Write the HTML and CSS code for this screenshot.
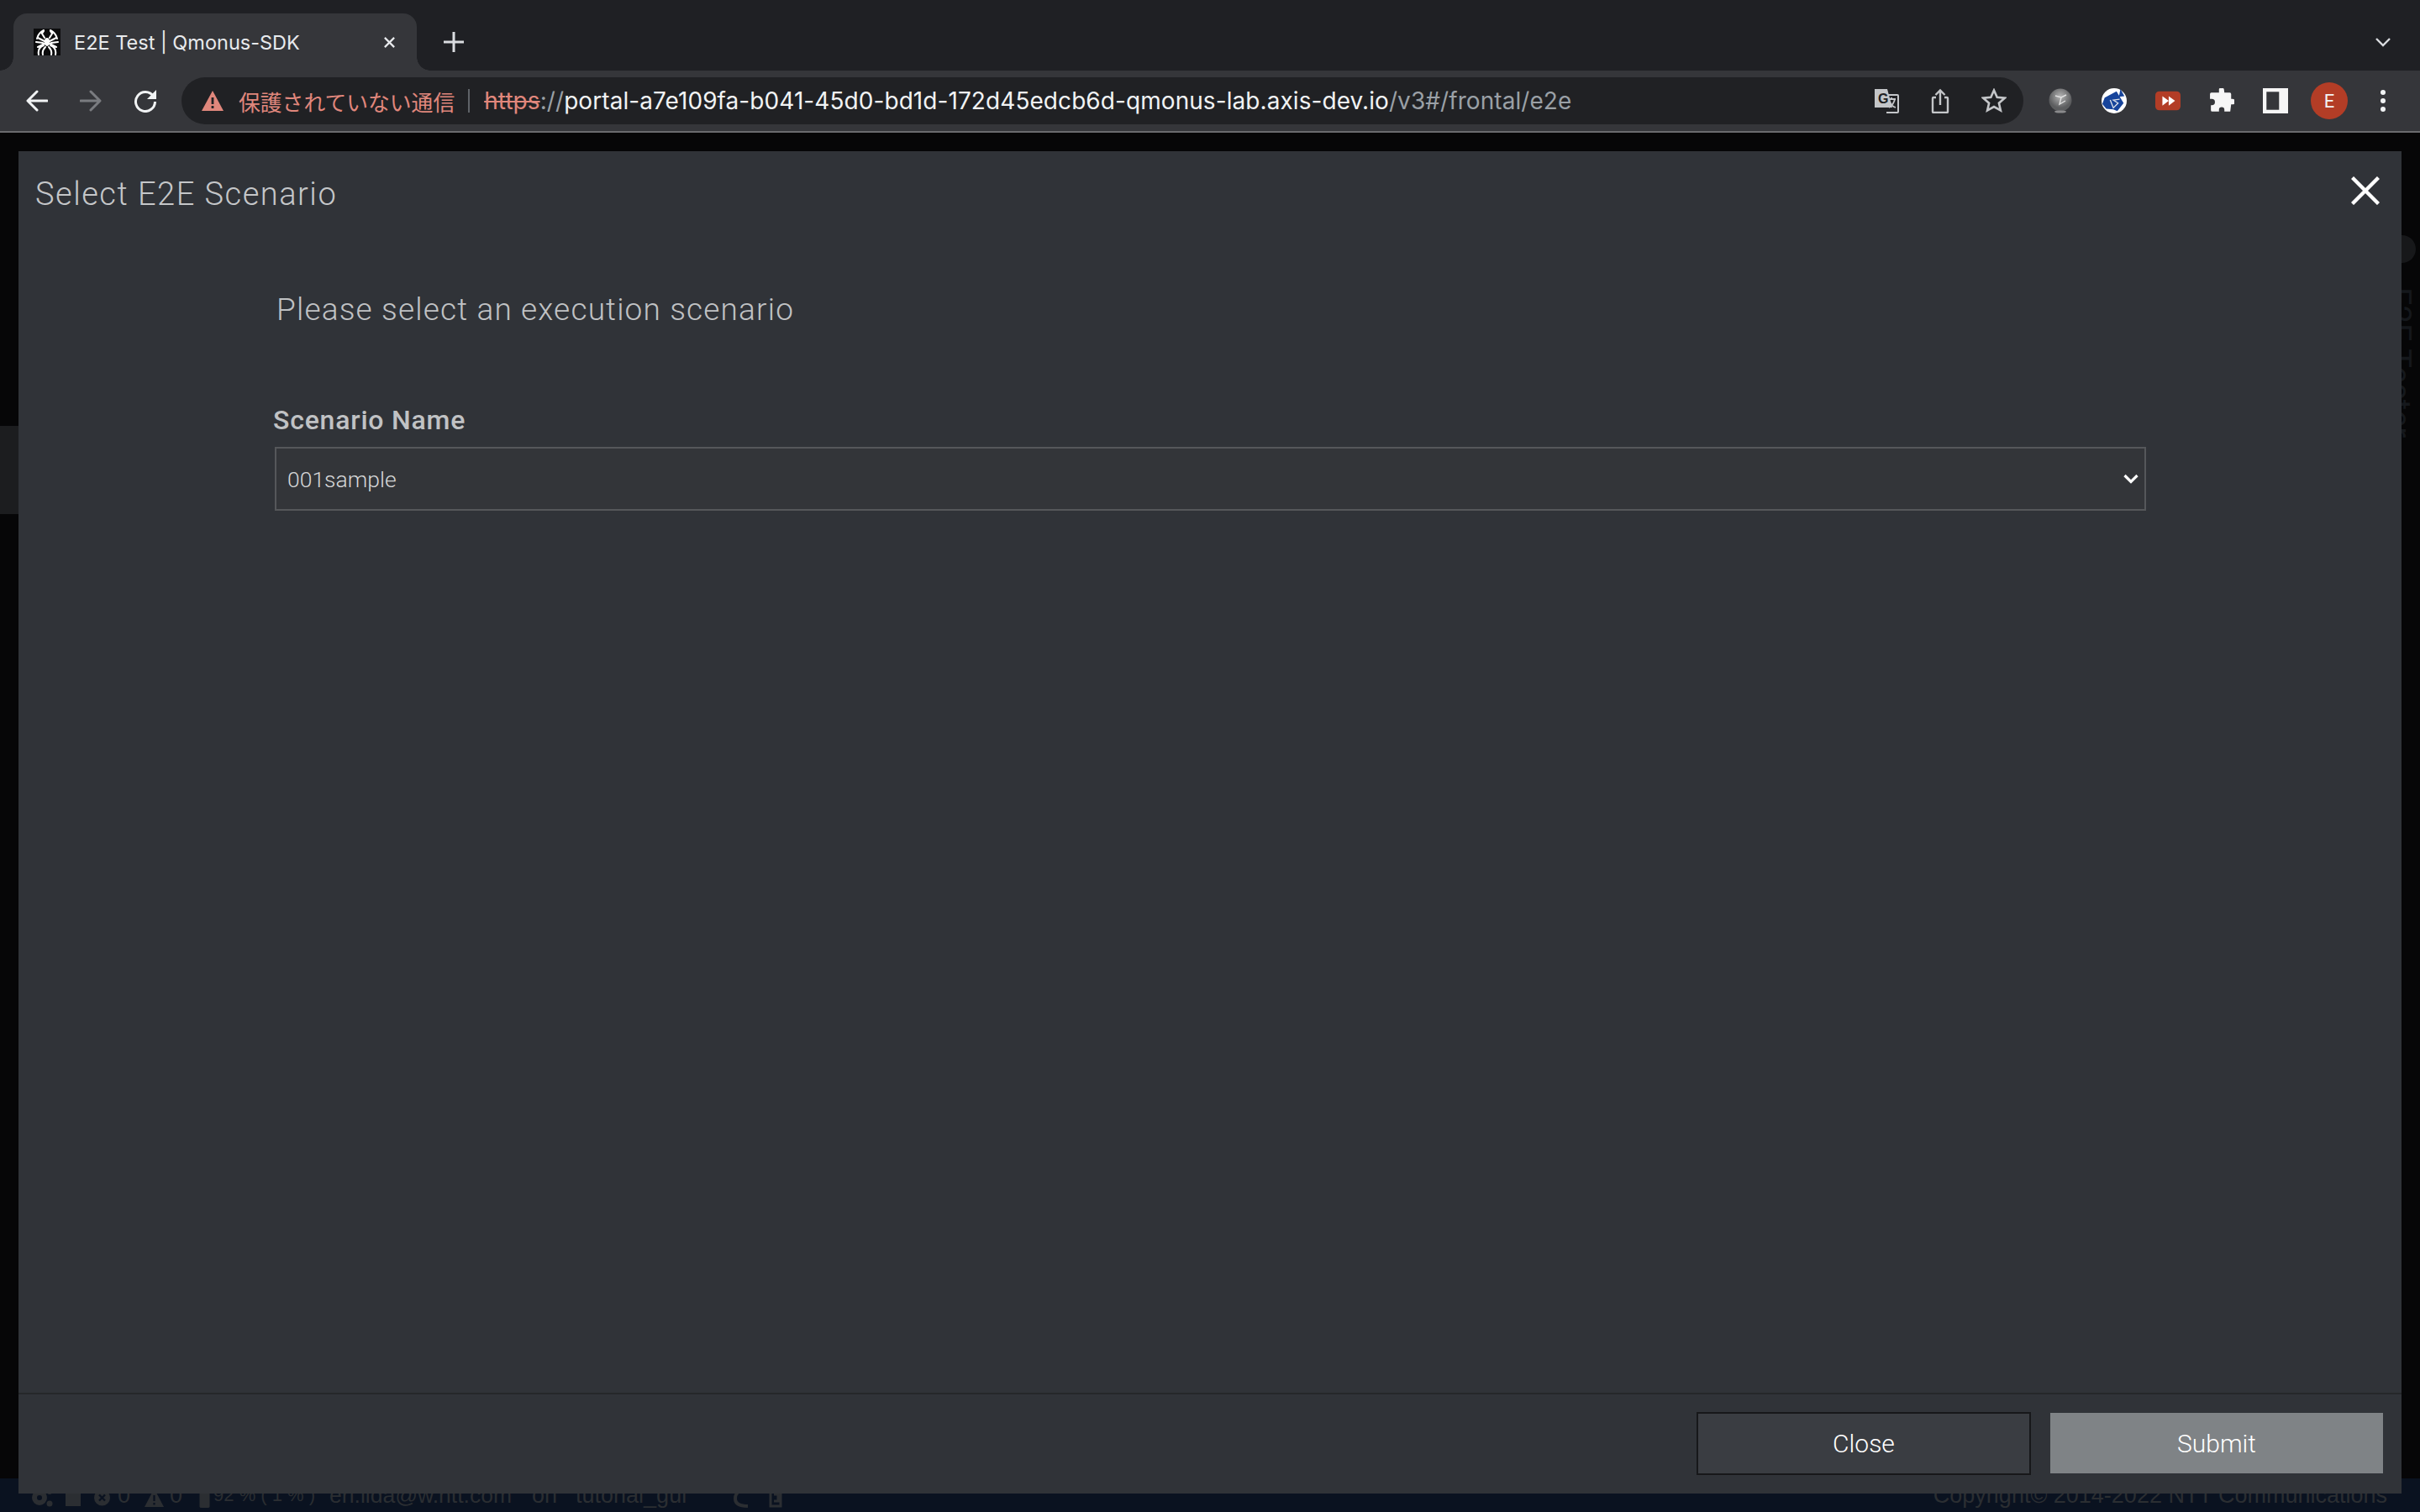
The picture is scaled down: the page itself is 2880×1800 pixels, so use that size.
FILE: index.html
```html
<!DOCTYPE html>
<html lang="ja">
<head>
<meta charset="utf-8">
<title>E2E Test | Qmonus-SDK</title>
<link rel="stylesheet" href="styles.css">
</head>
<body>
<div class="browser">
  <div class="tabstrip">
    <div class="tab">
      <svg class="favicon" viewBox="0 0 32 32"><rect width="32" height="32" fill="#0c0c0d"/><g fill="none" stroke="#fff" stroke-width="2" stroke-linecap="round"><path d="M12 2C8 4 5 8 4 12M20 2c4 2 7 6 8 10M13 11 10 6l2-3M19 11l3-5-2-3M5 11l22 11M27 11 5 22M3 16l8 1M29 16l-8 1M12 20c-5 2-7 6-6 11M20 20c5 2 7 6 6 11M14 22c-3 3-4 5-3 9M18 22c3 3 4 5 3 9"/></g><ellipse cx="16" cy="16" rx="3.400" ry="5" fill="#fff"/></svg>
      <span class="tab-title">E2E Test | Qmonus-SDK</span>
      <svg class="tab-close" viewBox="0 0 16 16"><path d="M2 2 14 14M14 2 2 14" stroke="#e8eaed" stroke-width="2.400"/></svg>
    </div>
    <svg class="new-tab" viewBox="0 0 24 24"><path d="M12 0v24M0 12h24" stroke="#dadce0" stroke-width="3"/></svg>
    <svg class="tab-menu" viewBox="0 0 20 12"><path d="M2 2l8 8 8-8" fill="none" stroke="#dadce0" stroke-width="2.400"/></svg>
  </div>
  <div class="toolbar">
    <svg class="nav-icon" viewBox="0 0 26 26"><path d="M25 13H3M13 2 2 13l11 11" fill="none" stroke="#f1f3f4" stroke-width="3" stroke-linecap="round" stroke-linejoin="round"/></svg>
    <svg class="nav-icon" viewBox="0 0 26 26"><path d="M1 13h22M13 2l11 11-11 11" fill="none" stroke="#7a7c80" stroke-width="3" stroke-linecap="round" stroke-linejoin="round"/></svg>
    <svg class="nav-icon" viewBox="0 0 28 28"><path d="M23.500 8.500A11.500 11.500 0 1 0 25.500 15" fill="none" stroke="#f1f3f4" stroke-width="3"/><path d="M27 1v11H16z" fill="#f1f3f4"/></svg>
    <div class="omnibox">
      <svg class="warn" viewBox="0 0 26 24"><path d="M13 0 26 24H0z" fill="#e0877c"/><path d="M11.600 8h2.800v8h-2.800zM11.600 18h2.800v3h-2.800z" fill="#202124"/></svg>
      <span class="insecure">保護されていない通信</span>
      <span class="divider"></span>
      <span class="url"><span class="https">https</span><span class="dim">://</span>portal-a7e109fa-b041-45d0-bd1d-172d45edcb6d-qmonus-lab.axis-dev.io<span class="dim">/v3#/frontal/e2e</span></span>
      <svg class="omni-icon" viewBox="0 0 30 30"><path d="M1 1h15l6 22H1z" fill="#c4c6c9"/><path d="M14 8h14a1 1 0 0 1 1 1v19a1 1 0 0 1-1 1H15" fill="none" stroke="#c4c6c9" stroke-width="2"/><text class="translate-g" x="5" y="18">G</text><path d="M17 13h9M21 11v2M25 13c-1 5-4 8-7 10M19 16c1 3 4 6 7 7" fill="none" stroke="#c4c6c9" stroke-width="1.800"/></svg>
      <svg class="omni-icon" viewBox="0 0 30 30"><path d="M15 20V3M9.500 8 15 2.500 20.500 8" fill="none" stroke="#c4c6c9" stroke-width="2.400"/><path d="M10 11H7a1 1 0 0 0-1 1v16a1 1 0 0 0 1 1h16a1 1 0 0 0 1-1V12a1 1 0 0 0-1-1h-3" fill="none" stroke="#c4c6c9" stroke-width="2.400"/></svg>
      <svg class="omni-icon" viewBox="0 0 30 30"><path d="M15 2.500l3.700 8.300 9 .9-6.800 6 2 8.800L15 22l-7.900 4.500 2-8.800-6.800-6 9-.9z" fill="none" stroke="#c4c6c9" stroke-width="2.600"/></svg>
    </div>
    <div class="extensions">
      <span class="ext"><svg viewBox="0 0 30 30"><defs><radialGradient id="ball" cx="50%" cy="35%"><stop offset="0" stop-color="#b5b5b5"/><stop offset="1" stop-color="#5c5d5f"/></radialGradient></defs><circle cx="15" cy="14" r="13.500" fill="url(#ball)"/><path d="M9 9l7 2 6-3M16 11l-2 8 7-4" fill="none" stroke="#e0e0e0" stroke-width="1.400"/><ellipse cx="15" cy="28" rx="7" ry="1.600" fill="#8a8a8c"/></svg></span>
      <span class="ext"><svg viewBox="0 0 32 32"><circle cx="16" cy="16" r="16" fill="#fff"/><path d="M4 12 19 4l9 15-8 10-5-2-9-1-5-6z" fill="#17449b"/><path d="M24 1l5 9-7 1z" fill="#17449b"/><path d="M11 15l4 10 6-6-6-4 8-1" fill="none" stroke="#dfe3ea" stroke-width="1.400"/></svg></span>
      <span class="ext"><svg viewBox="0 0 32 26"><rect width="32" height="24" y="1" rx="5" fill="#b33d26"/><path d="M9 7l8 6-8 6zM17 7l8 6-8 6z" fill="#fff"/></svg></span>
      <span class="ext"><svg viewBox="0 0 28 28"><path d="M11 1a3 3 0 0 1 5.500 0l.5 4h6a1.500 1.500 0 0 1 1.500 1.500V12h1.500a3 3 0 0 1 0 6h-1.500l-1 8H17v-2a3 3 0 0 0-6 0v2H3.500A1.500 1.500 0 0 1 2 24.500V19h1a3.500 3.500 0 0 0 0-7H1V6.500A1.500 1.500 0 0 1 2.500 5H11z" fill="#f6f6f6"/></svg></span>
      <span class="ext"><svg viewBox="0 0 28 28"><path d="M0 0h28v28H0z" fill="#f6f6f6"/><path d="M4 4h14v20H4z" fill="#35363a"/></svg></span>
      <span class="avatar">E</span>
      <span class="ext kebab"><svg viewBox="0 0 8 26"><circle cx="4" cy="3" r="3" fill="#f1f3f4"/><circle cx="4" cy="13" r="3" fill="#f1f3f4"/><circle cx="4" cy="23" r="3" fill="#f1f3f4"/></svg></span>
    </div>
  </div>
  <div class="viewport">
    <div class="behind-left"></div>
    <div class="behind-right">
      <span class="behind-dot"></span>
      <span class="behind-vert">E2E Tester</span>
    </div>
    <div class="statusbar">
      <div class="status-left">
        <svg class="si si-gear" viewBox="0 0 26 24"><circle cx="10" cy="12" r="6" fill="none" stroke="#2b2e32" stroke-width="6"/><circle cx="22" cy="5" r="3" fill="#2b2e32"/><circle cx="22" cy="19" r="3.500" fill="#2b2e32"/></svg>
        <svg class="si si-square" viewBox="0 0 18 24"><path d="M0 6h12V0h6v22H0z" fill="#2b2e32"/></svg>
        <svg class="si si-x" viewBox="0 0 19 24"><circle cx="9.500" cy="12" r="9.500" fill="#2b2e32"/><path d="M6 8.500l7 7M13 8.500l-7 7" stroke="#0a1220" stroke-width="2.400"/></svg>
        <span class="st-zero">0</span>
        <svg class="si si-warn" viewBox="0 0 23 24"><path d="M11.500 1 23 23H0z" fill="#2b2e32"/><path d="M10.400 9h2.200v7h-2.200zM10.400 18h2.200v2.500h-2.200z" fill="#0a1220"/></svg>
        <span class="st-zero2">0</span>
        <svg class="si si-batt" viewBox="0 0 13 26"><rect y="2" width="13" height="24" rx="2" fill="#2b2e32"/></svg>
        <span class="st-pct">92 % ( 1 % )</span>
        <span class="st-user">eri.iida@w.ntt.com</span>
        <span class="st-on">on</span>
        <span class="st-branch">tutorial_gui</span>
        <svg class="si si-moon" viewBox="0 0 20 24"><path d="M18 2C9 2 3 6 3 13s6 9 15 9" fill="none" stroke="#2b2e32" stroke-width="4"/></svg>
        <svg class="si si-cup" viewBox="0 0 18 24"><path d="M3 2h12v20H3zM7 8h5v8H7" fill="none" stroke="#2b2e32" stroke-width="3"/></svg>
      </div>
      <span class="status-copy">Copyright© 2014-2022 NTT Communications</span>
    </div>
    <div class="modal">
      <header class="modal-head">
        <h1 class="modal-title">Select E2E Scenario</h1>
        <svg class="modal-x" viewBox="0 0 34 34"><path d="M1.500 1.500 32.500 32.500M32.500 1.500 1.500 32.500" stroke="#fff" stroke-width="4.400"/></svg>
      </header>
      <main class="modal-body">
        <p class="lead">Please select an execution scenario</p>
        <label class="field-label" for="scenario">Scenario Name</label>
        <div class="select-wrap">
          <select class="field-select" id="scenario"><option>001sample</option></select>
          <svg class="select-arrow" viewBox="0 0 18 12"><path d="M1.500 2 9 9.500 16.500 2" fill="none" stroke="#fff" stroke-width="3.200"/></svg>
        </div>
      </main>
      <footer class="modal-foot">
        <button class="btn btn-close">Close</button>
        <button class="btn btn-submit">Submit</button>
      </footer>
    </div>
  </div>
</div>
</body>
</html>
```
FILE: styles.css
```css
* { box-sizing: border-box; }
html, body { margin: 0; padding: 0; height: 100%; background: #060607; overflow: hidden; }
body { font-family: "Roboto", "Liberation Sans", "Noto Sans CJK JP", sans-serif; }
.browser { width: 2880px; height: 1800px; display: flex; flex-direction: column; }

.tabstrip { height: 84px; background: #1f2024; display: flex; align-items: flex-end; padding-left: 16px; flex: none; }
.tab { width: 480px; height: 68px; background: #35363a; border-radius: 16px 16px 0 0; display: flex; align-items: center; padding: 0 25px 0 24px; position: relative; }
.tab::before, .tab::after { content: ""; position: absolute; bottom: 0; width: 16px; height: 16px; }
.tab::before { left: -16px; background: radial-gradient(circle at 0 0, transparent 15.500px, #35363a 16px); }
.tab::after { right: -16px; background: radial-gradient(circle at 100% 0, transparent 15.500px, #35363a 16px); }
.favicon { width: 32px; height: 32px; flex: none; }
.tab-title { margin-left: 16px; font-size: 23.500px; color: #e8eaed; flex: 1; font-family: "Inter", "Liberation Sans", sans-serif; white-space: nowrap; }
.tab-close { width: 15px; height: 15px; flex: none; }
.new-tab { width: 24px; height: 24px; margin: 0 0 22px 32px; }
.tab-menu { width: 20px; height: 12px; margin: 0 34px 28px auto; }

.toolbar { height: 74px; flex: none; background: #35363a; border-bottom: 2px solid #6a6b6e; display: flex; align-items: center; padding: 0 0 0 31px; }
.nav-icon { width: 26px; height: 26px; flex: none; margin-right: 38px; }
.nav-icon:nth-child(3) { width: 28px; height: 28px; margin-right: 29px; }
.omnibox { width: 2192px; height: 56px; background: #202124; border-radius: 28px; display: flex; align-items: center; padding-left: 24px; flex: none; }
.warn { width: 26px; height: 24px; flex: none; }
.insecure { margin-left: 18px; color: #e0877c; font-family: "Noto Sans CJK JP", sans-serif; font-size: 25.800px; white-space: nowrap; }
.divider { width: 2px; height: 28px; background: #5f6368; margin: 0 17px 0 16px; flex: none; }
.url { color: #f1f3f4; white-space: nowrap; flex: 1; font-family: "Inter", "Liberation Sans", sans-serif; font-size: 28px; letter-spacing: .07px; }
.https { color: #e0877c; text-decoration: line-through; }
.dim { color: #9aa0a6; }
.omni-icon { width: 30px; height: 30px; flex: none; margin-right: 34px; }
.omni-icon:last-child { margin-right: 20px; }
.translate-g { font: bold 16px "Liberation Sans", sans-serif; fill: #202124; }
.extensions { display: flex; align-items: center; margin-left: 29px; }
.ext { width: 30px; height: 30px; margin-right: 34px; display: flex; align-items: center; justify-content: center; flex: none; }
.ext svg { width: 100%; height: 100%; }
.avatar { width: 44px; height: 44px; border-radius: 50%; background: #b33d26; color: #f1f3f4; font-size: 22px; display: flex; align-items: center; justify-content: center; margin: 0 38px 0 -7px; flex: none; }
.kebab { width: 8px; height: 26px; margin: 0; }

.viewport { flex: 1; position: relative; padding: 22px; display: flex; }
.behind-left { position: absolute; left: 0; top: 349px; width: 22px; height: 105px; background: #1c1d1f; }
.behind-right { position: absolute; left: 2858px; top: 122px; width: 22px; height: 220px; }
.behind-dot { position: absolute; left: -16px; top: 0; width: 33px; height: 33px; border-radius: 50%; background: #17181a; }
.behind-vert { position: absolute; left: -22px; top: 62px; writing-mode: vertical-rl; font-size: 38px; line-height: 38px; color: #15181c; white-space: nowrap; }
.statusbar { position: absolute; left: 0; right: 0; bottom: 0; height: 40px; background: #0a1220; color: #2b2e32; font-size: 27px; display: flex; align-items: flex-end; justify-content: space-between; padding: 0 39px 5px 37px; font-family: "Liberation Sans", sans-serif; line-height: 30px; }
.status-left { display: flex; align-items: flex-end; white-space: nowrap; }
.si { height: 24px; flex: none; }
.si-gear { width: 26px; }
.si-square { width: 18px; margin-left: 15px; }
.si-x { width: 19px; margin-left: 16px; }
.st-zero { margin-left: 9px; }
.si-warn { width: 23px; margin-left: 17px; }
.st-zero2 { margin-left: 7px; }
.si-batt { width: 13px; margin-left: 20px; }
.st-pct { margin-left: 4px; font-size: 22px; }
.st-user { margin-left: 17px; font-size: 26.500px; }
.st-on { margin-left: 24px; }
.st-branch { margin-left: 22px; }
.si-moon { width: 20px; margin-left: 55px; }
.si-cup { width: 18px; margin-left: 22px; }
.status-copy { white-space: nowrap; }

.modal { position: relative; width: 2836px; height: 1598px; background: #303338; display: flex; flex-direction: column; }
.modal-head { height: 90px; flex: none; display: flex; align-items: center; justify-content: space-between; padding: 0 26px 0 20px; }
.modal-title { margin: 12px 0 0; font-size: 38px; font-weight: 300; color: #c5c7c9; letter-spacing: 1.500px; }
.modal-x { width: 34px; height: 34px; flex: none; margin-top: 3px; }
.modal-body { flex: 1; display: flex; flex-direction: column; align-items: flex-start; padding: 0 0 0 305px; }
.lead { margin: 77px 0 0 2px; font-size: 37px; font-weight: 300; color: #c0c2c4; letter-spacing: 1.150px; line-height: 44px; }
.field-label { margin: 91px 0 0 -2px; font-size: 32px; font-weight: 500; color: #c0c2c4; line-height: 36px; letter-spacing: .8px; }
.select-wrap { position: relative; width: 2227px; height: 76px; margin-top: 14px; }
.field-select { appearance: none; display: block; width: 100%; height: 100%; background: #333539; border: 2px solid #55575a; color: #d6d7d8; font-family: "Roboto", sans-serif; font-weight: 300; font-size: 26.500px; padding: 0 6px 0 13px; border-radius: 0; }
.select-arrow { position: absolute; right: 9px; top: 32px; width: 18px; height: 12px; pointer-events: none; }
.modal-foot { height: 120px; flex: none; border-top: 2px solid #25272a; display: flex; justify-content: flex-end; align-items: center; gap: 23px; padding: 0 22px 2px 0; }
.btn { font-family: "Roboto", sans-serif; font-weight: 300; font-size: 30px; color: #fff; border-radius: 0; height: 72px; width: 396px; }
.btn-close { background: #3a3d42; border: 2px solid #17181a; width: 398px; height: 75px; }
.btn-submit { background: #7f8386; border: 0; }
```
